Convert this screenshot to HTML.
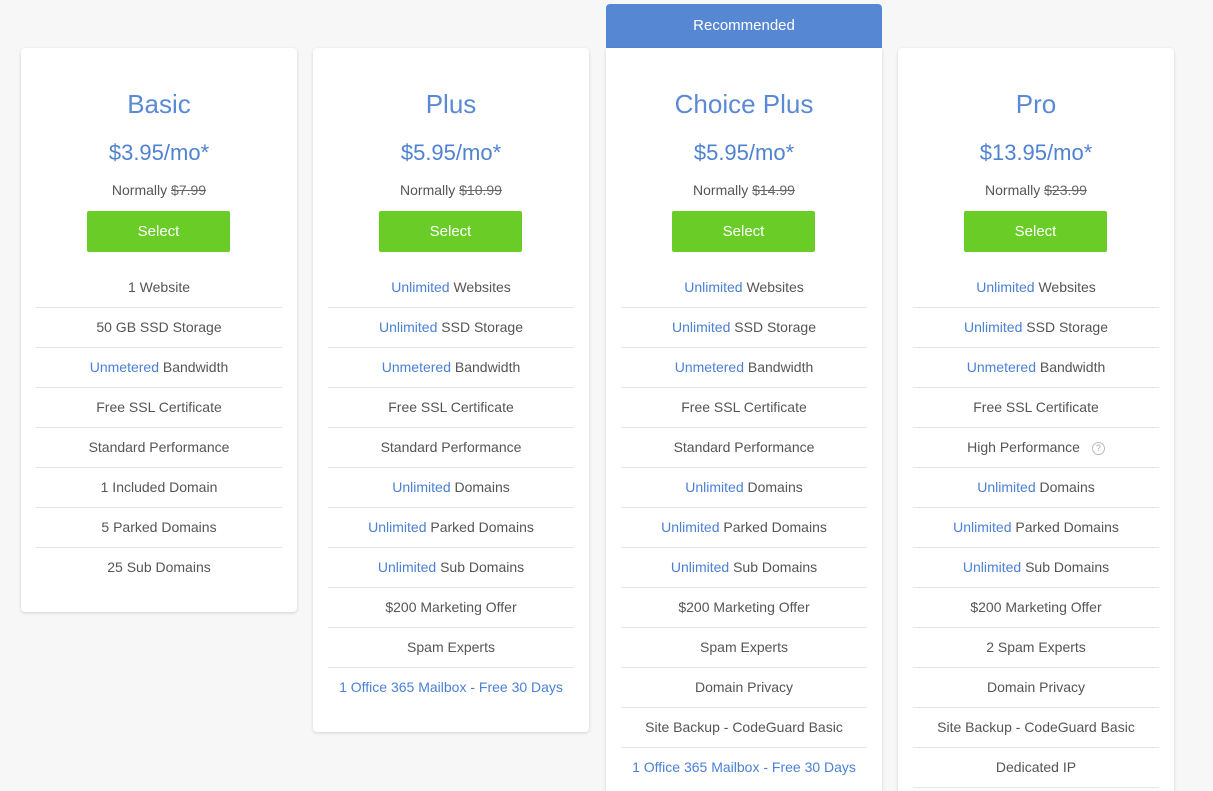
<!DOCTYPE html>
<html style="height:791px;overflow:hidden"><head><style>
body{margin:0;width:1213px;height:791px;background:#f7f7f7;font-family:"Liberation Sans",sans-serif;overflow:hidden;position:relative}
.card{position:absolute;top:48px;width:276px;background:#fff;border-radius:4px;box-shadow:0 1px 3px rgba(0,0,0,.15);text-align:center}
.rec{position:absolute;left:606px;top:4px;width:276px;height:44px;background:#5587d3;border-radius:4px 4px 0 0;color:#fff;font-size:15px;line-height:44px;text-align:center}
h2{margin:0;position:absolute;top:38px;left:0;right:0;font-weight:normal;font-size:26px;color:#5a8ad6;line-height:36px}
.price{position:absolute;top:90px;left:0;right:0;font-size:22px;color:#4f82d0;line-height:30px}
.norm{position:absolute;top:133px;left:0;right:0;font-size:14px;color:#555;line-height:18px}
.norm s{color:#666}
.btn{position:absolute;top:163px;left:66px;width:143px;height:41px;background:#6acd27;border-radius:2px;color:#fff;font-size:15px;line-height:41px}
ul{list-style:none;margin:0;padding:220px 15px 25px}
li{height:39px;line-height:39px;border-bottom:1px solid #e5e5e5;font-size:14px;color:#555}
li:last-child{border-bottom:none}
b{font-weight:normal;color:#4a80d6}
.q{display:inline-block;width:11px;height:11px;border:1px solid #bbb;border-radius:50%;font-size:9px;line-height:11px;color:#aaa;margin-left:8px;vertical-align:1px}
</style></head><body>
<div class="rec">Recommended</div>
<div class="card" style="left:21px">
<h2>Basic</h2><div class="price">$3.95/mo*</div><div class="norm">Normally <s>$7.99</s></div><div class="btn">Select</div>
<ul><li>1 Website</li><li>50 GB SSD Storage</li><li><b>Unmetered</b> Bandwidth</li><li>Free SSL Certificate</li><li>Standard Performance</li><li>1 Included Domain</li><li>5 Parked Domains</li><li>25 Sub Domains</li></ul></div>
<div class="card" style="left:313px">
<h2>Plus</h2><div class="price">$5.95/mo*</div><div class="norm">Normally <s>$10.99</s></div><div class="btn">Select</div>
<ul><li><b>Unlimited</b> Websites</li><li><b>Unlimited</b> SSD Storage</li><li><b>Unmetered</b> Bandwidth</li><li>Free SSL Certificate</li><li>Standard Performance</li><li><b>Unlimited</b> Domains</li><li><b>Unlimited</b> Parked Domains</li><li><b>Unlimited</b> Sub Domains</li><li>$200 Marketing Offer</li><li>Spam Experts</li><li><b>1 Office 365 Mailbox - Free 30 Days</b></li></ul></div>
<div class="card" style="left:606px;border-radius:0 0 4px 4px">
<h2>Choice Plus</h2><div class="price">$5.95/mo*</div><div class="norm">Normally <s>$14.99</s></div><div class="btn">Select</div>
<ul><li><b>Unlimited</b> Websites</li><li><b>Unlimited</b> SSD Storage</li><li><b>Unmetered</b> Bandwidth</li><li>Free SSL Certificate</li><li>Standard Performance</li><li><b>Unlimited</b> Domains</li><li><b>Unlimited</b> Parked Domains</li><li><b>Unlimited</b> Sub Domains</li><li>$200 Marketing Offer</li><li>Spam Experts</li><li>Domain Privacy</li><li>Site Backup - CodeGuard Basic</li><li><b>1 Office 365 Mailbox - Free 30 Days</b></li></ul></div>
<div class="card" style="left:898px">
<h2>Pro</h2><div class="price">$13.95/mo*</div><div class="norm">Normally <s>$23.99</s></div><div class="btn">Select</div>
<ul><li><b>Unlimited</b> Websites</li><li><b>Unlimited</b> SSD Storage</li><li><b>Unmetered</b> Bandwidth</li><li>Free SSL Certificate</li><li>High Performance <span class="q">?</span></li><li><b>Unlimited</b> Domains</li><li><b>Unlimited</b> Parked Domains</li><li><b>Unlimited</b> Sub Domains</li><li>$200 Marketing Offer</li><li>2 Spam Experts</li><li>Domain Privacy</li><li>Site Backup - CodeGuard Basic</li><li style="border-bottom:1px solid #e5e5e5">Dedicated IP</li><li></li></ul></div>
</body></html>
